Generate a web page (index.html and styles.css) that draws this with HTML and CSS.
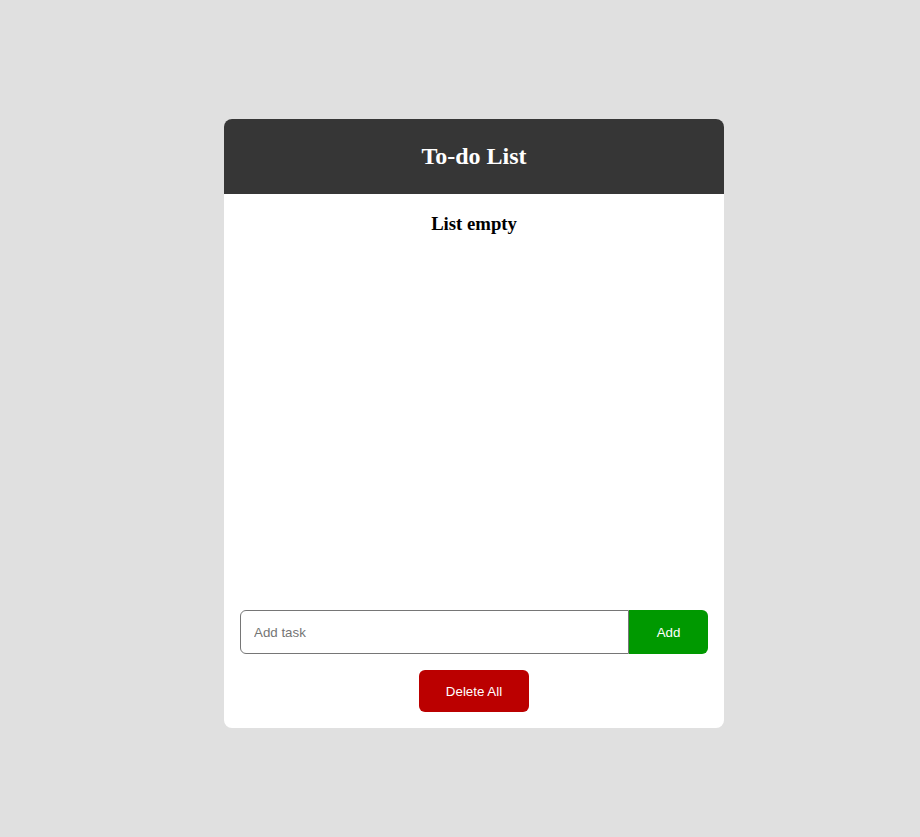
FILE: index.html
```html
<!DOCTYPE html>
<html>
<head>
<meta charset="utf-8">
<link rel="stylesheet" href="styles.css">
</head>
<body>
<div class="card">
  <div class="header"><h2 class="title">To-do List</h2></div>
  <div class="content">
    <div class="list"><h3 class="empty">List empty</h3></div>
    <div class="form">
      <input class="task-input" type="text" placeholder="Add task">
      <button class="add-btn">Add</button>
    </div>
    <div class="actions"><button class="delete-btn">Delete All</button></div>
  </div>
</div>
</body>
</html>
```
FILE: styles.css
```css
html, body {
  margin: 0;
  padding: 0;
  background: #e0e0e0;
  height: 100%;
}
body {
  padding-top: 119px;
  box-sizing: border-box;
  font-family: "Liberation Serif", "Times New Roman", serif;
}
.card {
  width: 500px;
  height: 609px;
  margin: 0 auto 0 224px;
  background: #ffffff;
  border-radius: 8px;
  overflow: hidden;
  display: flex;
  flex-direction: column;
}
.header {
  height: 75px;
  background: #363636;
  display: flex;
  align-items: center;
  justify-content: center;
  flex-shrink: 0;
}
.title {
  margin: 0;
  color: #ffffff;
  font-size: 24px;
  font-weight: bold;
}
.content {
  flex: 1;
  display: flex;
  flex-direction: column;
  padding: 0 16px 16px;
}
.list {
  flex: 1;
}
.empty {
  margin: 19px 0 0;
  text-align: center;
  font-size: 18.72px;
  line-height: 22px;
  color: #000;
}
.form {
  display: flex;
  height: 44px;
}
.task-input {
  flex: 1;
  box-sizing: border-box;
  height: 44px;
  border: 1px solid #767676;
  border-radius: 6px 0 0 6px;
  padding: 0 13px;
  font-family: "Liberation Sans", Arial, sans-serif;
  font-size: 13.333px;
  color: #333;
  outline: none;
  margin: 0;
}
.task-input::placeholder {
  color: #757575;
}
.add-btn {
  width: 79px;
  height: 44px;
  border: none;
  margin: 0;
  background: #009900;
  color: #ffffff;
  border-radius: 0 6px 6px 0;
  font-family: "Liberation Sans", Arial, sans-serif;
  font-size: 13.333px;
}
.actions {
  display: flex;
  justify-content: center;
  margin-top: 16px;
}
.delete-btn {
  width: 110px;
  height: 42px;
  border: none;
  background: #bb0000;
  color: #ffffff;
  border-radius: 6px;
  font-family: "Liberation Sans", Arial, sans-serif;
  font-size: 13.333px;
}
```
